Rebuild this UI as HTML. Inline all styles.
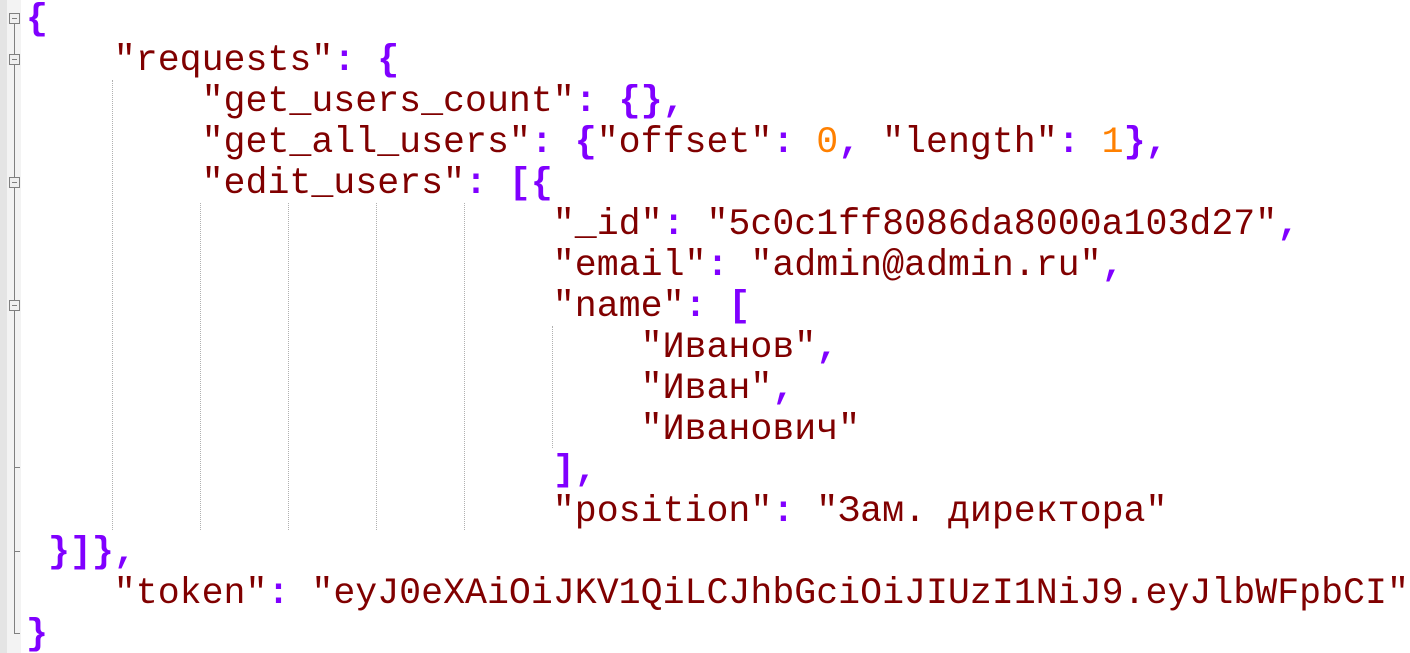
<!DOCTYPE html>
<html><head><meta charset="utf-8"><style>
html,body{margin:0;padding:0;background:#fff;width:1410px;height:653px;overflow:hidden;position:relative}
.m1{position:absolute;left:0;top:0;width:7px;height:653px;background:#e4e4e4}
.m2{position:absolute;left:7px;top:0;width:14px;height:653px;background:#f3f3f3}
.fl{position:absolute;left:14px;width:1px;background:#808080}
.box{position:absolute;left:9px;width:9px;height:9px;border:1px solid #808080;background:#f0f0f0}
.box::after{content:"";position:absolute;left:2px;top:4px;width:5px;height:1px;background:#808080}
.tick{position:absolute;left:14px;width:6px;height:1px;background:#808080}
.g{position:absolute;width:0;border-left:1px dotted #b0b0b0}
.l{position:absolute;left:26px;height:41px;line-height:41px;font-family:"Courier New","Liberation Mono",monospace;font-size:36.6px;white-space:pre;color:#800000}
.p{color:#8000ff;font-weight:bold}
.n{color:#ff8000}
</style></head><body>
<div class="m1"></div><div class="m2"></div>
<div class="fl" style="top:22px;height:612px"></div>
<div class="box" style="top:13px"></div>
<div class="box" style="top:54px"></div>
<div class="box" style="top:177px"></div>
<div class="box" style="top:300px"></div>
<div class="tick" style="top:467px"></div>
<div class="tick" style="top:551px"></div>
<div class="tick" style="top:633px"></div>
<div class="g" style="left:112px;top:80px;height:450px"></div>
<div class="g" style="left:200px;top:203px;height:327px"></div>
<div class="g" style="left:288px;top:203px;height:327px"></div>
<div class="g" style="left:376px;top:203px;height:327px"></div>
<div class="g" style="left:464px;top:203px;height:327px"></div>
<div class="g" style="left:552px;top:326px;height:122px"></div>
<div class="l" style="top:-1px"><span class="p">{</span></div>
<div class="l" style="top:40px">    "requests"<span class="p">:</span> <span class="p">{</span></div>
<div class="l" style="top:81px">        "get_users_count"<span class="p">:</span> <span class="p">{},</span></div>
<div class="l" style="top:122px">        "get_all_users"<span class="p">:</span> <span class="p">{</span>"offset"<span class="p">:</span> <span class="n">0</span><span class="p">,</span> "length"<span class="p">:</span> <span class="n">1</span><span class="p">},</span></div>
<div class="l" style="top:163px">        "edit_users"<span class="p">:</span> <span class="p">[{</span></div>
<div class="l" style="top:204px">                        "_id"<span class="p">:</span> "5c0c1ff8086da8000a103d27"<span class="p">,</span></div>
<div class="l" style="top:245px">                        "email"<span class="p">:</span> "admin@admin.ru"<span class="p">,</span></div>
<div class="l" style="top:286px">                        "name"<span class="p">:</span> <span class="p">[</span></div>
<div class="l" style="top:327px">                            "Иванов"<span class="p">,</span></div>
<div class="l" style="top:368px">                            "Иван"<span class="p">,</span></div>
<div class="l" style="top:409px">                            "Иванович"</div>
<div class="l" style="top:450px">                        <span class="p">],</span></div>
<div class="l" style="top:491px">                        "position"<span class="p">:</span> "Зам. директора"</div>
<div class="l" style="top:532px"> <span class="p">}]},</span></div>
<div class="l" style="top:573px">    "token"<span class="p">:</span> "eyJ0eXAiOiJKV1QiLCJhbGciOiJIUzI1NiJ9.eyJlbWFpbCI"</div>
<div class="l" style="top:614px"><span class="p">}</span></div>
</body></html>
